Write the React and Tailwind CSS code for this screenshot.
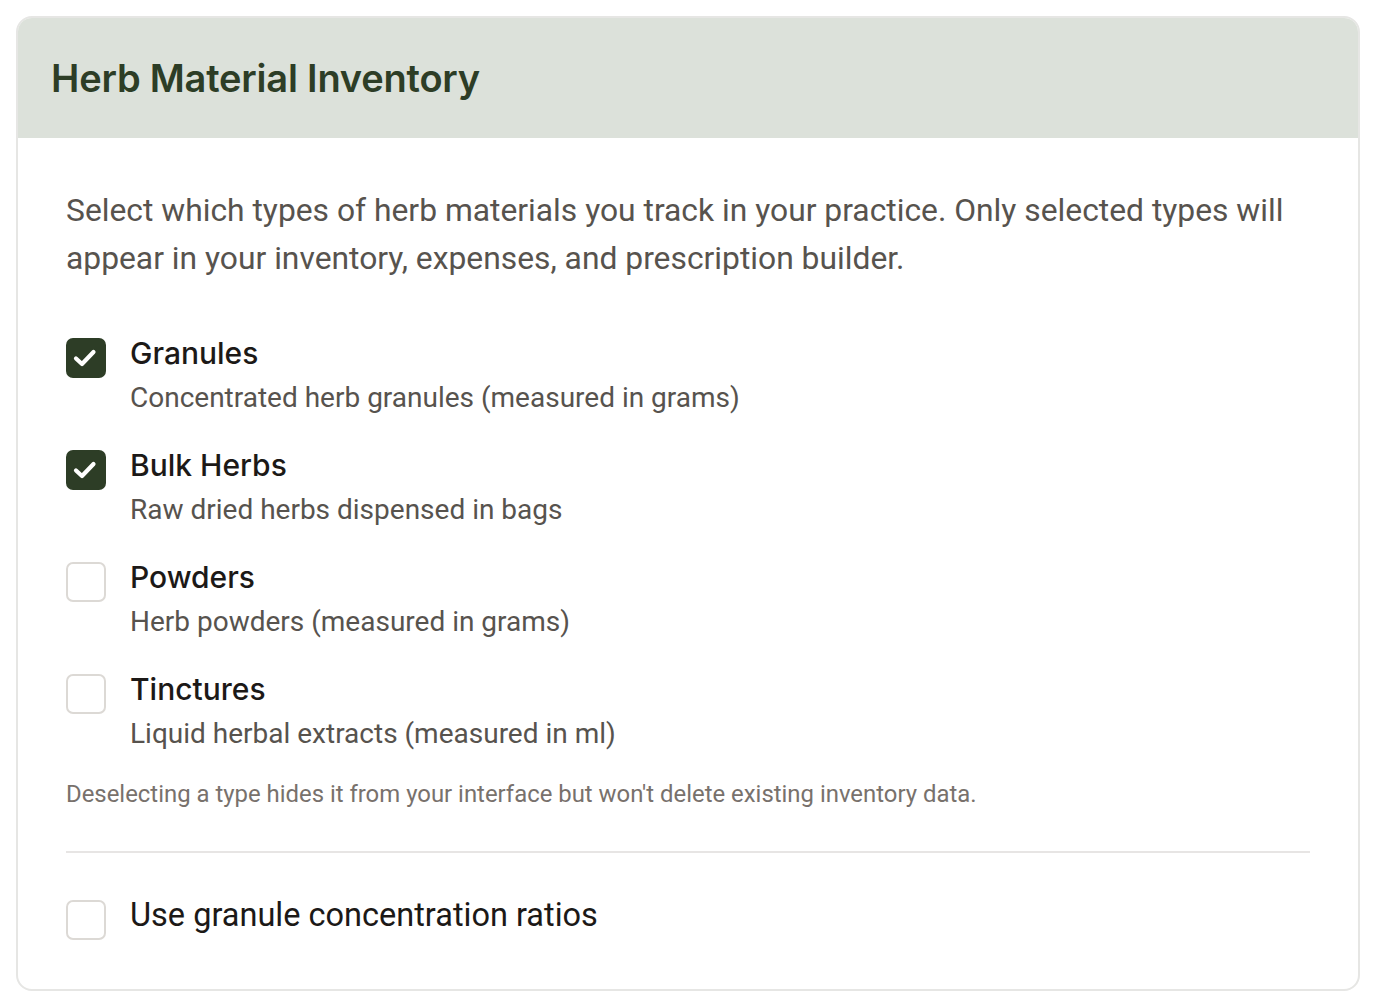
import { useState } from 'react';

const types = [
  { id: 'granules', label: 'Granules', desc: 'Concentrated herb granules (measured in grams)', on: true },
  { id: 'bulk', label: 'Bulk Herbs', desc: 'Raw dried herbs dispensed in bags', on: true },
  { id: 'powders', label: 'Powders', desc: 'Herb powders (measured in grams)', on: false },
  { id: 'tinctures', label: 'Tinctures', desc: 'Liquid herbal extracts (measured in ml)', on: false },
];

function Box({ checked, onClick }) {
  return (
    <button
      onClick={onClick}
      className={
        checked
          ? 'w-[40px] h-[40px] shrink-0 rounded-[7px] bg-[#2d3d26] flex items-center justify-center'
          : 'w-[40px] h-[40px] shrink-0 rounded-[7px] border-2 border-[#dcd9d5] bg-white'
      }
    >
      {checked && (
        <svg width="40" height="40" viewBox="0 0 40 40" fill="none" stroke="white" strokeWidth="4.2" strokeLinecap="round" strokeLinejoin="round">
          <path d="M10 20.5l6 5.5 11.5-12" />
        </svg>
      )}
    </button>
  );
}

export default function App() {
  const [sel, setSel] = useState(Object.fromEntries(types.map(t => [t.id, t.on])));
  const [ratios, setRatios] = useState(false);

  return (
    <div className="min-h-screen bg-white pt-[16px] pl-[16px] pr-[16px] font-['Roboto',sans-serif]">
      <div className="w-[1344px] border-2 border-[#e6e6e4] rounded-[16px] overflow-hidden">
        <div className="bg-[#dce1da] h-[120px] pl-[33px] flex items-center">
          <h2 className="font-['Inter',sans-serif] font-semibold text-[38px] text-[#2d3d26] tracking-[-0.2px]">
            Herb Material Inventory
          </h2>
        </div>

        <div className="px-[48px] pt-[48px] pb-[44px]">
          <p className="text-[31.8px] leading-[48px] text-[#57534e]">
            Select which types of herb materials you track in your practice. Only selected types will appear in your inventory, expenses, and prescription builder.
          </p>

          <div className="mt-[51px] flex flex-col gap-[25px]">
            {types.map(t => (
              <div key={t.id} className="flex gap-[24px]">
                <div className="pt-[5px]">
                  <Box checked={sel[t.id]} onClick={() => setSel({ ...sel, [t.id]: !sel[t.id] })} />
                </div>
                <div>
                  <div className="font-['Inter',sans-serif] font-medium text-[30px] leading-[40px] text-[#1c1917]">{t.label}</div>
                  <div className="text-[28px] leading-[44px] mt-[3px] text-[#57534e]">{t.desc}</div>
                </div>
              </div>
            ))}
          </div>

          <p className="mt-[20px] text-[23.9px] leading-[36px] text-[#78716c]">
            Deselecting a type hides it from your interface but won't delete existing inventory data.
          </p>

          <div className="mt-[39px] border-t-2 border-[#e7e5e4]" />

          <div className="mt-[42px] flex items-start gap-[24px]">
            <div className="pt-[5px]">
              <Box checked={ratios} onClick={() => setRatios(!ratios)} />
            </div>
            <span className="text-[32.5px] leading-[40px] text-[#1c1917]">Use granule concentration ratios</span>
          </div>
        </div>
      </div>
    </div>
  );
}
